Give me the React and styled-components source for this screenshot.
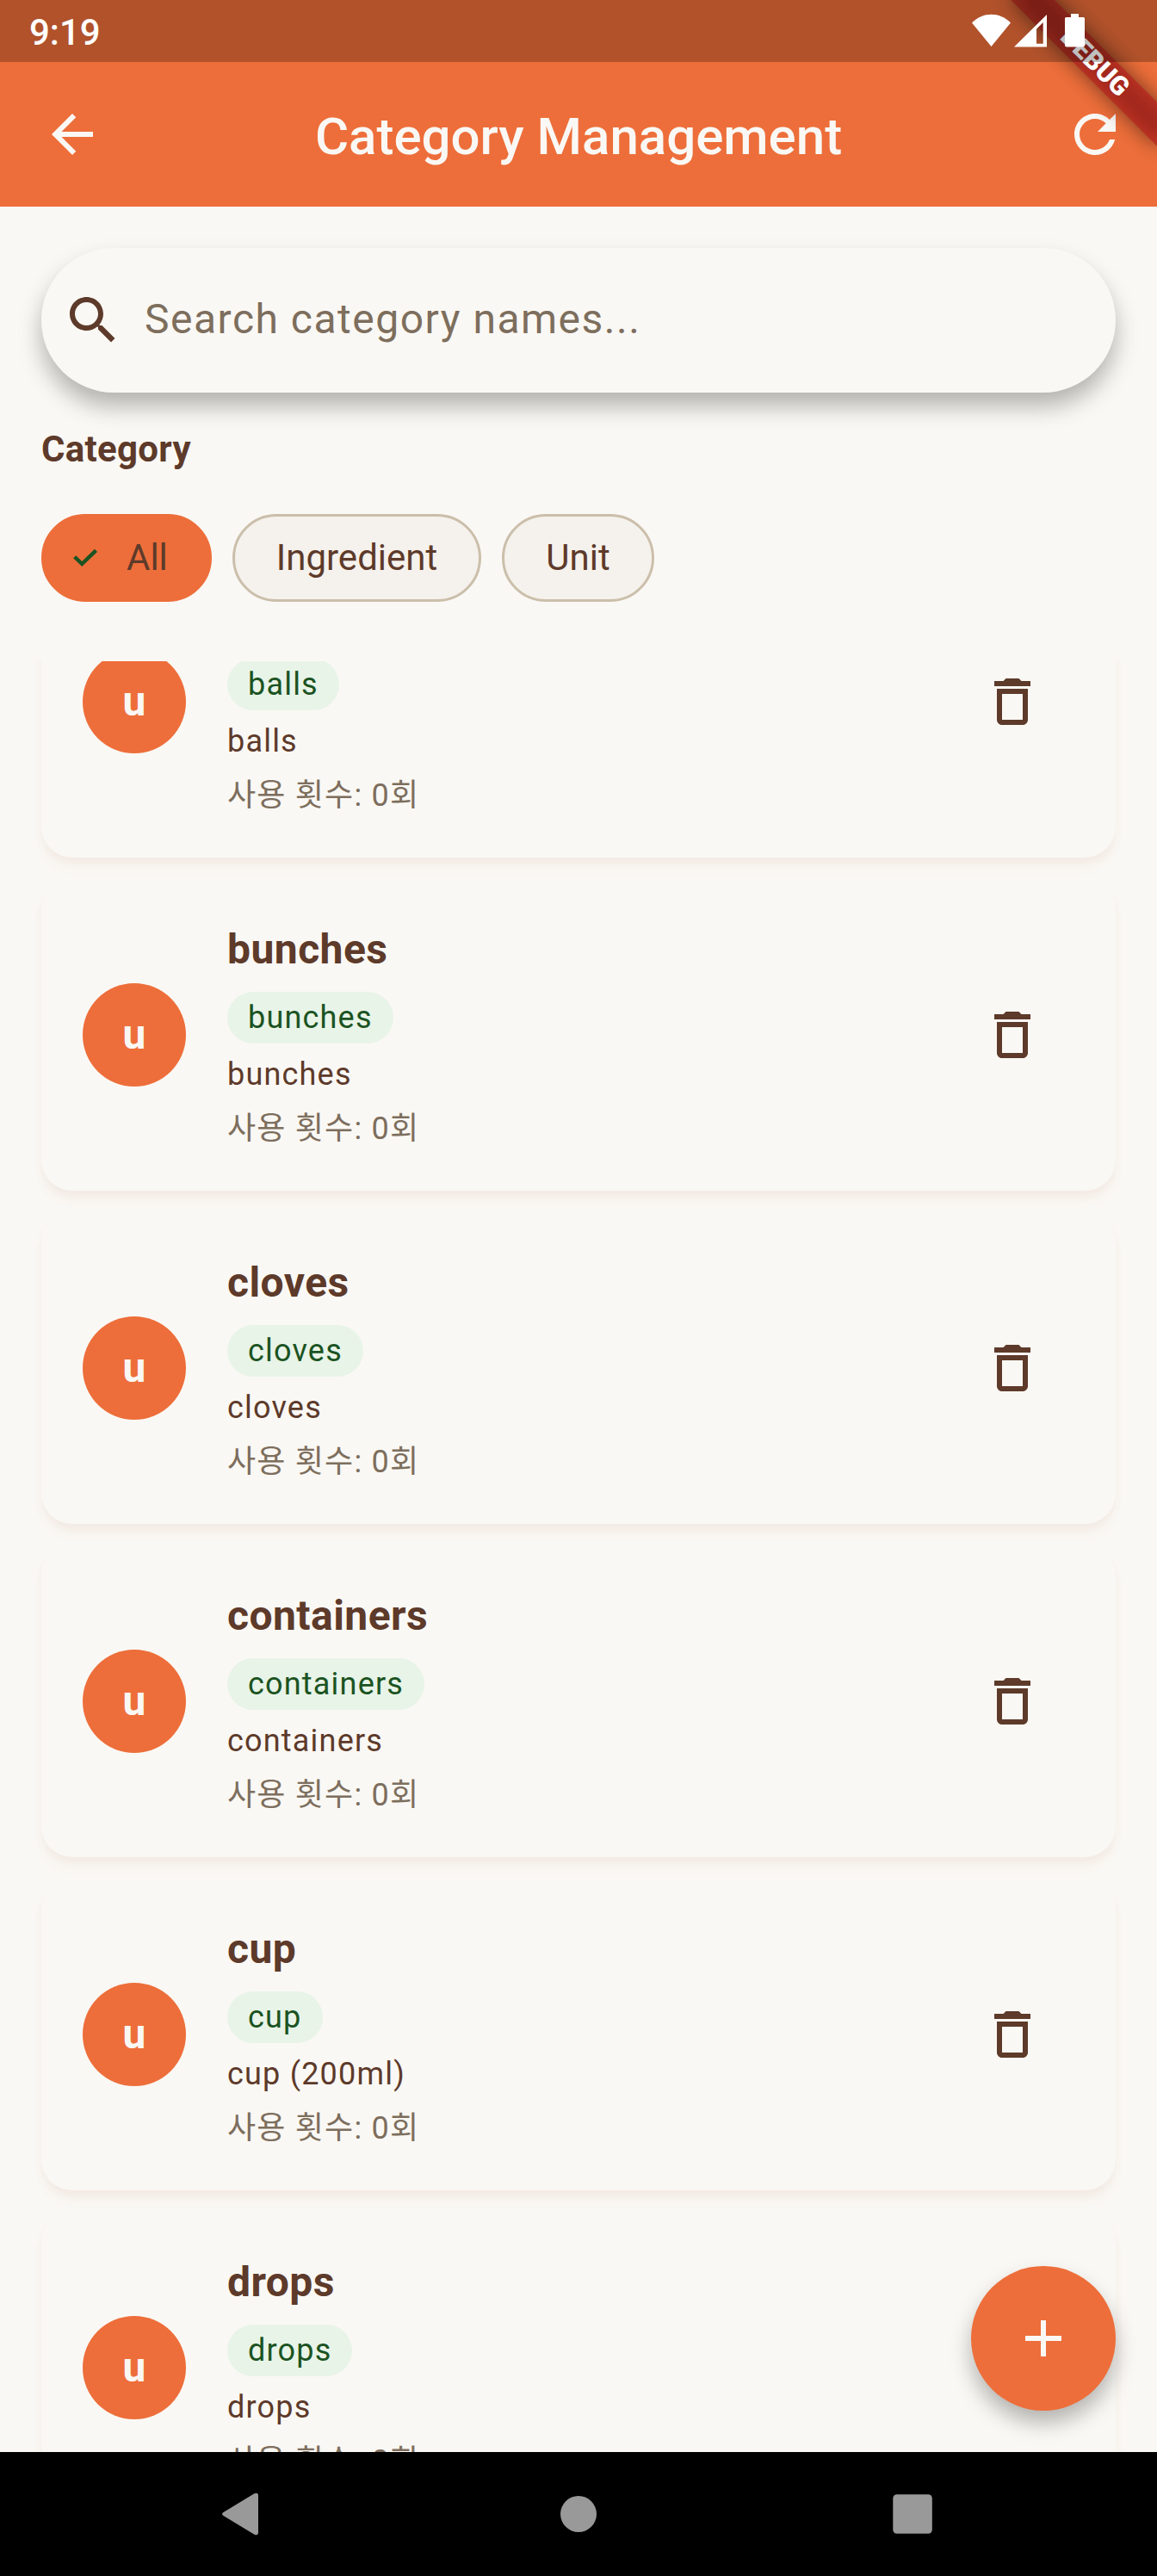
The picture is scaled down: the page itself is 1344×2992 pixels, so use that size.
import React from "react";
import styled, { createGlobalStyle } from "styled-components";

const c = {
  orange: "#ed6e3a",
  cream: "#faf8f4",
  brown: "#5d3a2a",
  muted: "#7d6e5d",
  outline: "#cbbfab",
  chip: "#f5f1ec",
  mint: "#e8f4e8",
  green: "#1b5322",
};

const GlobalStyle = createGlobalStyle`
  *, *::before, *::after { box-sizing: border-box; }
  body { margin: 0; background: ${c.cream}; }
  button { border: 0; padding: 0; background: none; font: inherit; color: inherit; }
  h1, h2, h3, p { margin: 0; }
`;

const Screen = styled.div`
  position: relative;
  display: flex;
  flex-direction: column;
  width: 1344px;
  height: 2992px;
  overflow: hidden;
  background: ${c.cream};
  color: ${c.brown};
  font-family: Roboto, "Noto Sans CJK KR", sans-serif;
`;

const Header = styled.header`
  position: relative;
  height: 240px;
  flex: none;
  background: ${c.orange};
`;

const StatusBar = styled.div`
  position: relative;
  z-index: 2;
  display: flex;
  align-items: center;
  justify-content: space-between;
  height: 72px;
  padding: 0 84px 0 34px;
  background: rgba(0, 0, 0, 0.25);
  color: #fff;
`;

const Clock = styled.span`
  font-size: 42px;
  font-weight: 500;
  line-height: 72px;
  padding-top: 3px;
`;

const StatusIcons = styled.svg`
  display: block;
  width: 132px;
  height: 72px;
`;

const AppBar = styled.div`
  display: flex;
  align-items: center;
  justify-content: space-between;
  height: 168px;
  padding: 0 12px 0 24px;
  color: ${c.cream};
`;

const AppTitle = styled.h1`
  flex: 1;
  margin-left: -12px;
  padding-top: 5px;
  text-align: center;
  font-size: 60px;
  font-weight: 500;
  line-height: 84px;
  white-space: nowrap;
`;

const IconButton = styled.button`
  display: flex;
  align-items: center;
  justify-content: center;
  flex: none;
  width: ${(p) => p.$width || 144}px;
  height: 144px;
`;

const Glyph = styled.svg`
  display: block;
  flex: none;
  width: 72px;
  height: 72px;
  fill: currentColor;
`;

const BannerLayer = styled.div`
  position: absolute;
  z-index: 1;
  top: 0;
  right: 0;
  width: 300px;
  height: 240px;
  overflow: hidden;
  pointer-events: none;
`;

const Ribbon = styled.div`
  position: absolute;
  top: 84px;
  right: -120px;
  width: 240px;
  height: 36px;
  transform-origin: 120px -84px;
  transform: rotate(45deg);

  &::before {
    content: "";
    position: absolute;
    inset: 0;
    background: rgba(0, 0, 0, 0.5);
    filter: blur(11.9px);
  }
`;

const RibbonLabel = styled.div`
  position: relative;
  height: 36px;
  background: rgba(183, 28, 28, 0.63);
  color: #fff;
  text-align: center;
  font-size: 30.6px;
  font-weight: 900;
  line-height: 36px;
`;

const Filters = styled.section`
  flex: none;
  height: 528px;
  padding: 48px 48px 0;
`;

const SearchBar = styled.div`
  display: flex;
  align-items: center;
  gap: 24px;
  height: 168px;
  padding: 0 24px;
  border-radius: 84px;
  background: ${c.cream};
  box-shadow: 0 16px 27px rgba(0, 0, 0, 0.28);
`;

const Placeholder = styled.span`
  padding-bottom: 3px;
  font-size: 48px;
  line-height: 72px;
  letter-spacing: 1.5px;
  color: ${c.muted};
`;

const SectionLabel = styled.h2`
  margin-top: 36px;
  font-size: 42px;
  font-weight: 700;
  line-height: 60px;
  letter-spacing: 0.3px;
`;

const ChipRow = styled.div`
  display: flex;
  gap: 24px;
  margin-top: 45px;
`;

const Chip = styled.button`
  display: flex;
  align-items: center;
  height: 102px;
  padding: ${(p) => (p.$selected ? "0 48px 0 24px" : "0 48px")};
  border-radius: 51px;
  border: 3px solid ${(p) => (p.$selected ? c.orange : c.outline)};
  background: ${(p) => (p.$selected ? c.orange : c.chip)};
  font-size: 42px;
  line-height: 60px;
`;

const CheckMark = styled.svg`
  width: 54px;
  height: 54px;
  margin-right: 18px;
  fill: none;
  stroke: ${c.green};
  stroke-width: 4.4;
`;

const ListViewport = styled.main`
  flex: 1;
  min-height: 0;
  overflow: hidden;
`;

const CardList = styled.div`
  display: flex;
  flex-direction: column;
  gap: 24px;
  margin-top: -135px;
  padding: 0 48px;
`;

const Card = styled.article`
  display: flex;
  align-items: center;
  flex: none;
  height: 363px;
  padding: 48px;
  border-radius: 36px;
  background: ${c.cream};
  box-shadow: 0 8px 10px rgba(160, 90, 50, 0.06), 0 14px 20px rgba(160, 90, 50, 0.014);
`;

const Avatar = styled.div`
  flex: none;
  width: 120px;
  height: 120px;
  margin-right: 48px;
  border-radius: 50%;
  background: ${c.orange};
  color: ${c.cream};
  text-align: center;
  font-size: 48px;
  font-weight: 700;
  line-height: 120px;
`;

const CardBody = styled.div`
  display: flex;
  flex-direction: column;
  align-items: flex-start;
  flex: 1;
  gap: 12px;
`;

const CardTitle = styled.h3`
  height: 72px;
  font-size: 48px;
  font-weight: 700;
  line-height: 70px;
  letter-spacing: 0.45px;
`;

const Badge = styled.span`
  padding: 6px 24px;
  border-radius: 30px;
  background: ${c.mint};
  color: ${c.green};
  font-size: 36px;
  line-height: 48px;
  letter-spacing: 1.2px;
`;

const Line = styled.p`
  height: ${(p) => (p.$muted ? 51 : 48)}px;
  font-size: 36px;
  line-height: ${(p) => (p.$muted ? 55 : 48)}px;
  letter-spacing: 1.2px;
  color: ${(p) => (p.$muted ? c.muted : c.brown)};
`;

const Fab = styled.button`
  position: absolute;
  right: 48px;
  bottom: 192px;
  display: flex;
  align-items: center;
  justify-content: center;
  width: 168px;
  height: 168px;
  border-radius: 50%;
  background: ${c.orange};
  color: ${c.cream};
  box-shadow: 0 14px 24px rgba(0, 0, 0, 0.28);
`;

const NavBar = styled.nav`
  display: flex;
  align-items: center;
  justify-content: center;
  gap: 244px;
  flex: none;
  height: 144px;
  background: #000;
`;

const NavGlyph = styled.svg`
  display: block;
  width: 144px;
  height: 144px;
  fill: #999;
`;

const chips = [
  { label: "All", selected: true },
  { label: "Ingredient" },
  { label: "Unit" },
];

const units = [
  { name: "balls", detail: "balls" },
  { name: "bunches", detail: "bunches" },
  { name: "cloves", detail: "cloves" },
  { name: "containers", detail: "containers" },
  { name: "cup", detail: "cup (200ml)" },
  { name: "drops", detail: "drops" },
];

const Icon = ({ d }) => (
  <Glyph viewBox="0 0 24 24">
    <path d={d} />
  </Glyph>
);

const paths = {
  back: "M20 11H7.83l5.59-5.59L12 4l-8 8 8 8 1.41-1.41L7.83 13H20v-2z",
  refresh:
    "M17.65 6.35C16.2 4.9 14.21 4 12 4c-4.42 0-7.99 3.58-7.99 8s3.57 8 7.99 8c3.73 0 6.84-2.55 7.73-6h-2.08c-.82 2.33-3.04 4-5.65 4-3.31 0-6-2.69-6-6s2.69-6 6-6c1.66 0 3.14.69 4.22 1.78L13 11h7V4l-2.35 2.35z",
  search:
    "M15.5 14h-.79l-.28-.27C15.41 12.59 16 11.11 16 9.5 16 5.91 13.09 3 9.5 3S3 5.91 3 9.5 5.91 16 9.5 16c1.61 0 3.09-.59 4.23-1.57l.27.28v.79l5 4.99L20.49 19l-4.99-5zm-6 0C7.01 14 5 11.99 5 9.5S7.01 5 9.5 5 14 7.01 14 9.5 11.99 14 9.5 14z",
  trash:
    "M6 19c0 1.1.9 2 2 2h8c1.1 0 2-.9 2-2V7H6v12zM8 9h8v10H8V9zm7.5-5l-1-1h-5l-1 1H5v2h14V4h-3.5z",
  add: "M19 13h-6v6h-2v-6H5v-2h6V5h2v6h6v2z",
};

export default function App() {
  return (
    <Screen>
      <GlobalStyle />
      <Header>
        <StatusBar>
          <Clock>9:19</Clock>
          <StatusIcons viewBox="1128 0 132 72" fill="#fff">
            <path d="M1129 26.5C1142 13.500 1161 13.500 1174 26.500L1151.500 54Z" />
            <path
              fillRule="evenodd"
              d="M1216 17V54.500H1178ZM1211.700 26L1204 33.700V50.700H1211.700Z"
            />
            <path d="M1244 16h9v4h5.500a1.500 1.500 0 0 1 1.500 1.500v31a2 2 0 0 1-2 2h-19a2 2 0 0 1-2-2v-31a1.500 1.500 0 0 1 1.500-1.500h5.500z" />
          </StatusIcons>
        </StatusBar>
        <AppBar>
          <IconButton $width={120}>
            <Icon d={paths.back} />
          </IconButton>
          <AppTitle>Category Management</AppTitle>
          <IconButton $width={120}>
            <Icon d={paths.refresh} />
          </IconButton>
        </AppBar>
        <BannerLayer>
          <Ribbon>
            <RibbonLabel>DEBUG</RibbonLabel>
          </Ribbon>
        </BannerLayer>
      </Header>

      <Filters>
        <SearchBar>
          <Icon d={paths.search} />
          <Placeholder>Search category names...</Placeholder>
        </SearchBar>
        <SectionLabel>Category</SectionLabel>
        <ChipRow>
          {chips.map((chip) => (
            <Chip key={chip.label} $selected={chip.selected}>
              {chip.selected && (
                <CheckMark viewBox="0 0 54 54">
                  <path d="M11.700 25.700L20.200 34L36.500 18.300" />
                </CheckMark>
              )}
              {chip.label}
            </Chip>
          ))}
        </ChipRow>
      </Filters>

      <ListViewport>
        <CardList>
          {units.map((unit) => (
            <Card key={unit.name}>
              <Avatar>u</Avatar>
              <CardBody>
                <CardTitle>{unit.name}</CardTitle>
                <Badge>{unit.name}</Badge>
                <Line>{unit.detail}</Line>
                <Line $muted>사용 횟수: 0회</Line>
              </CardBody>
              <IconButton>
                <Icon d={paths.trash} />
              </IconButton>
            </Card>
          ))}
        </CardList>
      </ListViewport>

      <NavBar>
        <NavGlyph viewBox="0 0 144 144">
          <path d="M47.500 70L83 48.600Q88 46 88 51V93Q88 98 83 95.400L47.500 74Q44.500 72 47.500 70Z" />
        </NavGlyph>
        <NavGlyph viewBox="0 0 144 144">
          <circle cx="72" cy="72" r="21" />
        </NavGlyph>
        <NavGlyph viewBox="0 0 144 144">
          <rect x="49.300" y="49.200" width="45.500" height="45.500" rx="4.500" />
        </NavGlyph>
      </NavBar>

      <Fab>
        <Icon d={paths.add} />
      </Fab>
    </Screen>
  );
}
